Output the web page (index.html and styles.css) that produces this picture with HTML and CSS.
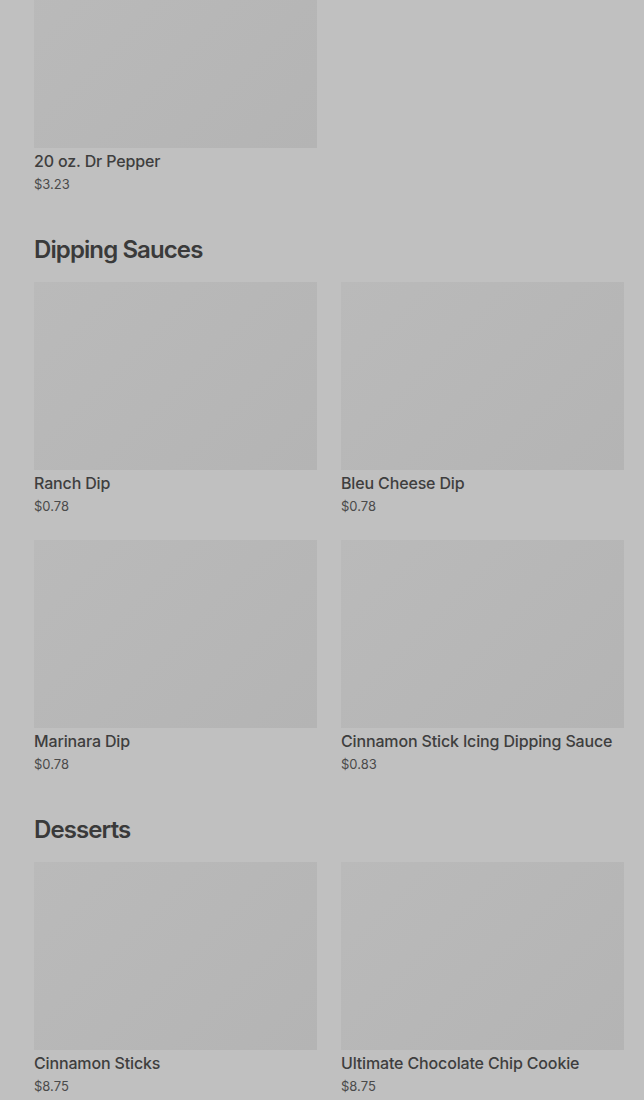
FILE: index.html
```html
<!DOCTYPE html>
<html lang="en">
<head>
    <meta charset="UTF-8">
    <meta name="viewport" content="width=device-width, initial-scale=1.0">
    <title>Menu</title>
    <link rel="stylesheet" href="styles.css">
</head>
<body>
    <div class="menu">
        <section class="category first">
            <div class="items">
                <div class="item">
                    <div class="item-img"></div>
                    <div class="item-name">20 oz. Dr Pepper</div>
                    <div class="item-price">$3.23</div>
                </div>
            </div>
        </section>

        <section class="category">
            <h2>Dipping Sauces</h2>
            <div class="items">
                <div class="item">
                    <div class="item-img"></div>
                    <div class="item-name">Ranch Dip</div>
                    <div class="item-price">$0.78</div>
                </div>
                <div class="item">
                    <div class="item-img"></div>
                    <div class="item-name">Bleu Cheese Dip</div>
                    <div class="item-price">$0.78</div>
                </div>
                <div class="item">
                    <div class="item-img"></div>
                    <div class="item-name">Marinara Dip</div>
                    <div class="item-price">$0.78</div>
                </div>
                <div class="item">
                    <div class="item-img"></div>
                    <div class="item-name">Cinnamon Stick Icing Dipping Sauce</div>
                    <div class="item-price">$0.83</div>
                </div>
            </div>
        </section>

        <section class="category">
            <h2>Desserts</h2>
            <div class="items">
                <div class="item">
                    <div class="item-img"></div>
                    <div class="item-name">Cinnamon Sticks</div>
                    <div class="item-price">$8.75</div>
                </div>
                <div class="item">
                    <div class="item-img"></div>
                    <div class="item-name">Ultimate Chocolate Chip Cookie</div>
                    <div class="item-price">$8.75</div>
                </div>
            </div>
        </section>
    </div>
</body>
</html>
```

FILE: styles.css
```css
* {
    margin: 0;
    padding: 0;
    box-sizing: border-box;
}

body {
    background-color: #c0c0c0;
    font-family: Inter, Roboto, "Liberation Sans", sans-serif;
    color: #3b3b3b;
    overflow: hidden;
}

.menu {
    padding: 0 20px 0 34px;
}

.category {
    margin-top: 40px;
}

/* page is scrolled, first card is cut at the top */
.category.first {
    margin-top: -40px;
}

.category h2 {
    font-size: 24px;
    line-height: 32px;
    font-weight: 600;
    letter-spacing: -0.9px;
    color: #3a3a3a;
    margin-bottom: 16px;
}

.items {
    display: grid;
    grid-template-columns: 1fr 1fr;
    column-gap: 24px;
    row-gap: 24px;
}

.item-img {
    height: 188px;
    background: linear-gradient(135deg, #bababa 0%, #b4b4b4 100%);
    margin-bottom: 1px;
}

.item-name {
    font-size: 16px;
    line-height: 24px;
    font-weight: 500;
    letter-spacing: -0.15px;
    color: #3e3e3e;
    white-space: nowrap;
}

.item-price {
    font-size: 13px;
    line-height: 20px;
    padding-top: 1px;
    color: #4a4a4a;
}
```
